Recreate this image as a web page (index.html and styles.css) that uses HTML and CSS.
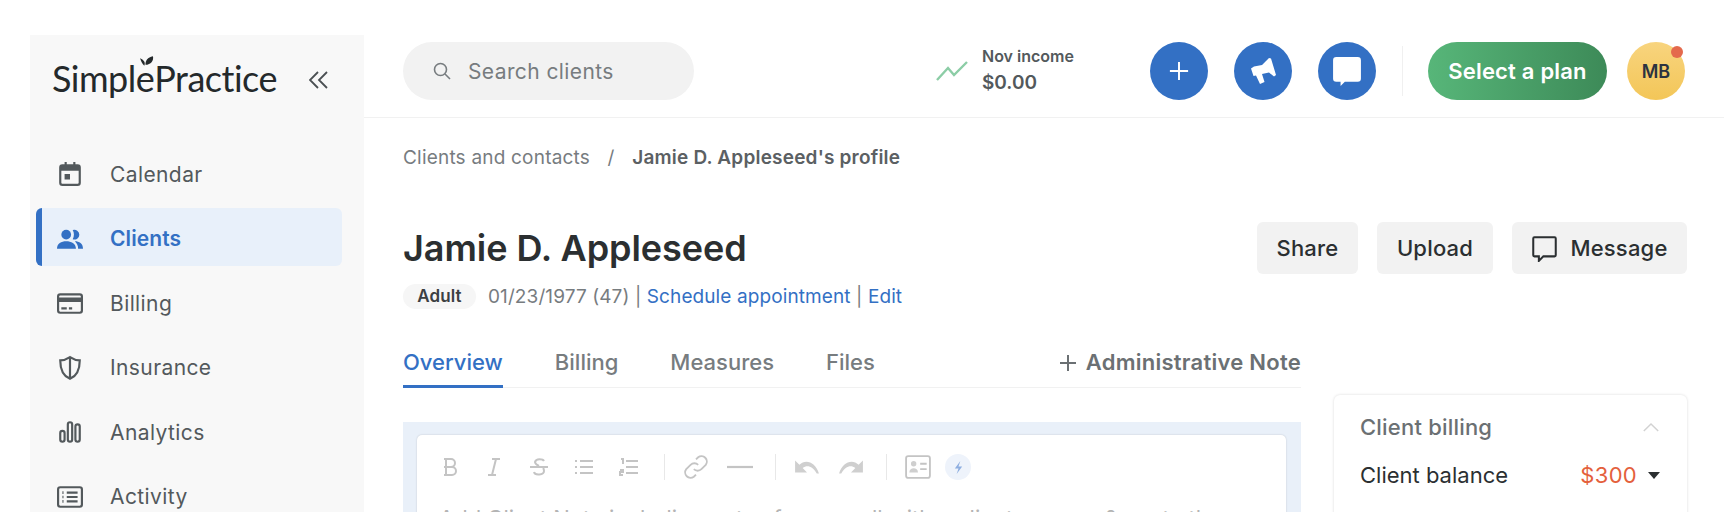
FILE: index.html
```html
<!DOCTYPE html>
<html>
<head>
<meta charset="UTF-8">
<title>Jamie D. Appleseed's profile</title>
<link rel="stylesheet" href="styles.css">
</head>
<body>
<aside class="sidebar">
	<div class="brand">
		<span class="logo">Simpl<span class="logo-e">e<svg class="leaf" viewBox="0 0 14 12"><path d="M1 3c1 3 2 5 4 7 1-3 0-5-4-7z"/><path d="M6 9c0-4 2-7 7-8 1 4-2 8-7 8z"/></svg></span>Practice</span>
		<svg class="collapse" viewBox="0 0 20 20"><path d="M9 2 1 10l8 8M18 2l-8 8 8 8"/></svg>
	</div>
	<nav class="nav">
		<a class="nav-item">
			<svg class="nav-icon" viewBox="0 0 24 24"><path class="fill" d="M7 1h2v4H7zM15 1h2v4h-2zM3 4h18v5H3zM7 12h5v5H7z"/><rect x="3" y="4" width="18" height="18" rx="2"/></svg>
			Calendar
		</a>
		<a class="nav-item active">
			<svg class="nav-icon" viewBox="0 0 24 24"><circle class="fill" cx="8.500" cy="8" r="4.500"/><path class="fill" d="M14.500 3.800a4.500 4.500 0 1 1 0 8.400c1.500-2.500 1.500-6 0-8.400zM0 21c0-5 4-7 8.500-7s9 2 9 7zM19.500 21c0-3-1-5-3-7 4 0 7.500 2 7.500 7z"/></svg>
			Clients
		</a>
		<a class="nav-item">
			<svg class="nav-icon" viewBox="0 0 24 24"><rect x="1" y="4" width="22" height="17" rx="2"/><path class="fill" d="M1 7h22v4H1zM4 16h5v2H4zM11 16h3v2h-3z"/></svg>
			Billing
		</a>
		<a class="nav-item">
			<svg class="nav-icon" viewBox="0 0 24 24"><path d="M12 2c3 2 6 3 9 3 0 8-2 14-9 17C5 19 3 13 3 5c3 0 6-1 9-3zM12 2v20"/></svg>
			Insurance
		</a>
		<a class="nav-item">
			<svg class="nav-icon" viewBox="0 0 24 24"><rect x="3" y="11" width="4" height="10" rx="2"/><rect x="10" y="3" width="4" height="18" rx="2"/><rect x="17" y="5" width="4" height="16" rx="2"/></svg>
			Analytics
		</a>
		<a class="nav-item">
			<svg class="nav-icon" viewBox="0 0 24 24"><rect x="1" y="3" width="22" height="18" rx="2"/><path d="M9 8h10M9 12h10M9 16h10"/><path class="dots" d="M5 8h1M5 12h1M5 16h1"/></svg>
			Activity
		</a>
	</nav>
</aside>

<div class="page">
	<header class="topbar">
		<div class="search">
			<svg class="search-icon" viewBox="0 0 20 20"><circle cx="8.500" cy="8.500" r="6"/><path d="m13 13 5 5"/></svg>
			Search clients
		</div>
		<div class="income">
			<svg class="income-icon" viewBox="0 0 32 22"><path d="M1 20 12 8l6 7L31 2"/></svg>
			<div>
				<div class="income-label">Nov income</div>
				<div class="income-value">$0.00</div>
			</div>
		</div>
		<div class="round-btns">
			<button class="round-btn"><svg viewBox="0 0 20 20"><path class="plus" d="M10 3v14M3 10h14"/></svg></button>
			<button class="round-btn"><svg class="horn" viewBox="0 0 28 28"><path class="solid" d="M20 1 22 1.500 27 18 25 19.500 20 15.500 13 17 15.500 25 11 27 7 18.500 4.500 19 2 11.500 5 9.500 13 8z"/></svg></button>
			<button class="round-btn"><svg class="big" viewBox="0 0 28 28"><path class="solid" d="M4 1h20a3 3 0 0 1 3 3v17a3 3 0 0 1-3 3H12l-4 4v-4H4a3 3 0 0 1-3-3V4a3 3 0 0 1 3-3z"/></svg></button>
		</div>
		<div class="vline"></div>
		<button class="plan-btn">Select a plan</button>
		<div class="avatar">MB<span class="dot"></span></div>
	</header>

	<main class="content">
		<div class="crumbs">Clients and contacts <span class="sep">/</span> <b>Jamie D. Appleseed's profile</b></div>

		<div class="title-row">
			<h1>Jamie D. Appleseed</h1>
			<div class="actions">
				<button class="btn btn-share">Share</button>
				<button class="btn btn-upload">Upload</button>
				<button class="btn btn-msg"><svg viewBox="0 0 24 24"><path d="M3 2h18a1 1 0 0 1 1 1v15a1 1 0 0 1-1 1H11l-4 4v-4H3a1 1 0 0 1-1-1V3a1 1 0 0 1 1-1z"/></svg>Message</button>
			</div>
		</div>

		<div class="meta">
			<span class="badge">Adult</span>
			<span>01/23/1977 (47) | <a>Schedule appointment</a> | <a>Edit</a></span>
		</div>

		<div class="columns">
			<div class="left">
				<div class="tabs">
					<a class="tab current">Overview</a>
					<a class="tab">Billing</a>
					<a class="tab">Measures</a>
					<a class="tab">Files</a>
					<a class="add-note"><svg viewBox="0 0 18 18"><path d="M9 1v16M1 9h16"/></svg>Administrative Note</a>
				</div>
				<div class="note-box">
					<div class="editor">
						<div class="toolbar">
							<span class="tool wider">
								<svg viewBox="0 0 20 20"><path d="M5 2h7a4 4 0 0 1 0 8H5h8a4 4 0 0 1 0 8H5M7 2v16"/></svg>
							</span>
							<span class="tool wider">
								<svg viewBox="0 0 20 20"><path d="M8 2h8M4 18h8M12 2 8 18"/></svg>
							</span>
							<span class="tool wider">
								<svg viewBox="0 0 20 20"><path d="M1 10h18M15 4c-1-2-8-3-9 1 0 2 2 3 4 4M5 15c1 4 10 3 10-1 0-1 0-2-1-3"/></svg>
							</span>
							<span class="tool wider">
								<svg viewBox="0 0 20 20"><path d="M6 4h13M6 10h13M6 16h13M1 4h2M1 10h2M1 16h2"/></svg>
							</span>
							<span class="tool">
								<svg viewBox="0 0 20 20"><path d="M7 4h12M7 10h12M7 16h12M2 2h2v5M1 13h3v2H1v3h3"/></svg>
							</span>
							<span class="tool-sep"></span>
							<span class="tool tool-big">
								<svg viewBox="0 0 24 24"><path d="M10 14a5 5 0 0 0 7 0l4-4a5 5 0 0 0-7-7l-2 2M14 10a5 5 0 0 0-7 0l-4 4a5 5 0 0 0 7 7l2-2"/></svg>
							</span>
							<span class="tool tool-big">
								<svg viewBox="0 0 20 20"><path d="M0 10h20"/></svg>
							</span>
							<span class="tool-sep"></span>
							<span class="tool tool-big">
								<svg viewBox="0 0 24 24"><path class="fill-gray" d="M1 6v11h11L8 13c4-3 9-2 13 5h2C20 8 11 4 5 10z"/></svg>
							</span>
							<span class="tool tool-big">
								<svg viewBox="0 0 24 24"><path class="fill-gray" d="M23 6v11H12l4-4c-4-3-9-2-13 5H1C4 8 13 4 19 10z"/></svg>
							</span>
							<span class="tool-sep"></span>
							<span class="tool tool-big">
								<svg viewBox="0 0 24 24"><rect x="1" y="2" width="22" height="20" rx="2"/><path d="M14 9h6M14 14h6"/><circle class="fill-gray" cx="8" cy="9" r="2.500"/><path class="fill-gray" d="M4 17c0-5 8-5 8 0z"/></svg>
							</span>
							<span class="bolt"><svg viewBox="0 0 12 16"><path d="M8 1 2 9h4l-2 6 6-8H6z"/></svg></span>
						</div>
						<div class="placeholder">Add Client Note including notes from a call with a client or copy &amp; paste the</div>
					</div>
				</div>
			</div>

			<div class="card">
				<div class="card-head">
					Client billing
					<svg class="chev" viewBox="0 0 20 12"><path d="m2 10 8-8 8 8"/></svg>
				</div>
				<div class="card-row">
					Client balance
					<span class="amount">$300<i class="caret"></i></span>
				</div>
			</div>
		</div>
	</main>
</div>
</body>
</html>
```

FILE: styles.css
```css
* {
	box-sizing: border-box;
}
html, body {
	height: 512px;
	overflow: hidden;
}
body {
	margin: 0;
	padding-left: 30px;
	display: flex;
	background-color: #ffffff;
	font-family: 'Inter', 'Liberation Sans', sans-serif;
	color: #2b2f31;
}
button {
	font-family: inherit;
	border: 0;
}
svg {
	display: block;
	fill: none;
	stroke: currentColor;
}

/* sidebar */
.sidebar {
	width: 334px;
	flex: none;
	margin-top: 35px;
	padding-left: 6px;
	background-color: #f8f8f8;
}
.brand {
	height: 110px;
	padding: 0 0 24px 16px;
	display: flex;
	align-items: center;
}
.logo {
	font-family: 'Lato', sans-serif;
	font-size: 36px;
	letter-spacing: -0.5px;
	color: #24292b;
}
.logo-e {
	position: relative;
}
.leaf {
	position: absolute;
	left: 3px;
	top: -1px;
	width: 15px;
	height: 13px;
	fill: #24292b;
	stroke: none;
}
.collapse {
	width: 20px;
	height: 20px;
	margin: 3px 0 0 32px;
	stroke: #4a4f52;
	stroke-width: 1.8;
}
.nav {
	display: flex;
	flex-direction: column;
	gap: 6.600px;
	width: 306px;
}
.nav-item {
	height: 58px;
	display: flex;
	align-items: center;
	gap: 27px;
	padding-left: 21px;
	font-size: 21px;
	letter-spacing: 0.4px;
	color: #53595c;
	flex: none;
}
.nav-item.active {
	background-color: #e8f0fa;
	border-left: 6px solid #3370c4;
	border-radius: 6px;
	margin: -2px 0 2px;
	padding-left: 15px;
	padding-top: 4px;
	color: #3370c4;
	font-weight: 600;
	letter-spacing: 0.1px;
}
.nav-icon {
	width: 26px;
	height: 26px;
	stroke-width: 2;
}
.nav-icon .fill {
	fill: currentColor;
	stroke: none;
}
.nav-icon .dots {
	stroke-width: 2.500;
}

/* top bar */
.page {
	flex: 1;
	min-width: 0;
}
.topbar {
	height: 118px;
	padding: 42px 32px 0 39px;
	display: flex;
	align-items: flex-start;
	border-bottom: 1px solid #f1f1f1;
}
.search {
	width: 291px;
	height: 58px;
	border-radius: 29px;
	background-color: #f2f2f2;
	display: flex;
	align-items: center;
	gap: 16px;
	padding-left: 29px;
	font-size: 21px;
	letter-spacing: 0.4px;
	color: #777c7f;
}
.search-icon {
	width: 20px;
	height: 20px;
	stroke: #777c7f;
	stroke-width: 1.600;
}
.income {
	display: flex;
	align-items: center;
	gap: 14px;
	margin-left: 242px;
	height: 58px;
	width: 214px;
}
.income-icon {
	width: 32px;
	height: 22px;
	stroke: #8ccda6;
	stroke-width: 2.400;
}
.income-label {
	font-size: 16px;
	font-weight: 600;
	color: #53595c;
	line-height: 23px;
}
.income-value {
	font-size: 19px;
	font-weight: 600;
	color: #53595c;
	line-height: 29px;
}
.round-btns {
	display: flex;
	gap: 26px;
}
.round-btn {
	width: 58px;
	height: 58px;
	padding: 0;
	border-radius: 50%;
	background-color: #3370c4;
	display: flex;
	align-items: center;
	justify-content: center;
	color: #ffffff;
}
.round-btn svg {
	width: 26px;
	height: 26px;
}
.round-btn svg.big {
	width: 30px;
	height: 30px;
}
.round-btn .plus {
	stroke-width: 1.500;
}
.round-btn .solid {
	fill: #ffffff;
	stroke: none;
}
.vline {
	width: 1px;
	height: 50px;
	margin: 4px 25px 0 26px;
	background-color: #f0f0f0;
}
.plan-btn {
	width: 179px;
	height: 58px;
	padding: 0;
	border-radius: 29px;
	background: linear-gradient(90deg, #57b679, #3d8a58);
	color: #ffffff;
	font-size: 22px;
	font-weight: 600;
	letter-spacing: 0.2px;
}
.avatar {
	position: relative;
	width: 58px;
	height: 58px;
	margin-left: 20px;
	border-radius: 50%;
	background: linear-gradient(180deg, #f8d47e, #f3c658);
	display: flex;
	align-items: center;
	justify-content: center;
	font-size: 18px;
	font-weight: 600;
	color: #2c3340;
}
.dot {
	position: absolute;
	top: 4px;
	right: 2px;
	width: 12px;
	height: 12px;
	border-radius: 50%;
	background-color: #e4694c;
}

/* profile */
.content {
	padding: 27px 37px 0 39px;
}
.crumbs {
	font-size: 19px;
	letter-spacing: 0.2px;
	line-height: 26px;
	color: #777c7f;
}
.crumbs b {
	font-weight: 600;
	color: #5b6063;
}
.sep {
	margin: 0 12px;
}
.title-row {
	display: flex;
	justify-content: space-between;
	margin-top: 51px;
}
h1 {
	margin: 0;
	font-size: 36px;
	line-height: 52px;
	font-weight: 600;
	letter-spacing: -0.05px;
	color: #2b2f31;
}
.actions {
	display: flex;
	gap: 19px;
}
.btn {
	height: 52px;
	padding: 0;
	border-radius: 6px;
	background-color: #f2f2f2;
	font-size: 22px;
	font-weight: 500;
	letter-spacing: 0.2px;
	color: #2b2f31;
	display: flex;
	align-items: center;
	justify-content: center;
}
.btn-share {
	width: 101px;
}
.btn-upload {
	width: 116px;
}
.btn-msg {
	width: 175px;
}
.btn-msg svg {
	width: 27px;
	height: 27px;
	margin-right: 12px;
	stroke-width: 1.800;
}
.meta {
	display: flex;
	align-items: center;
	gap: 12px;
	margin-top: 10px;
	height: 25px;
	font-size: 19px;
	letter-spacing: 0.1px;
	color: #777c7f;
}
.meta a {
	color: #3370c4;
}
.badge {
	width: 73px;
	height: 25px;
	border-radius: 13px;
	background-color: #f6f6f6;
	text-align: center;
	font-size: 17px;
	line-height: 25px;
	font-weight: 600;
	color: #3c4043;
}
.columns {
	display: flex;
	gap: 33px;
	margin-top: 31px;
}
.left {
	width: 898px;
	flex: none;
}
.tabs {
	height: 48px;
	display: flex;
	gap: 52px;
	border-bottom: 1px solid #f1f1f1;
	font-size: 22px;
	font-weight: 500;
	color: #777c7f;
}
.tab {
	height: 48px;
	padding-top: 9px;
}
.tab.current {
	color: #3370c4;
	border-bottom: 3px solid #3370c4;
}
.add-note {
	margin-left: auto;
	padding-top: 9px;
	display: flex;
	align-items: flex-start;
	gap: 9px;
	font-weight: 600;
	letter-spacing: 0.25px;
	color: #6b7073;
}
.add-note svg {
	width: 18px;
	height: 18px;
	margin-top: 5px;
	stroke-width: 2;
}
.note-box {
	margin-top: 34px;
	height: 200px;
	padding: 13px 15px 0 14px;
	background-color: #e9f0f9;
}
.editor {
	height: 200px;
	padding: 0 0 0 22px;
	background-color: #ffffff;
	border-radius: 5px;
	box-shadow: 0 0 2px rgba(0, 0, 0, 0.18);
}
.toolbar {
	height: 64px;
	display: flex;
	align-items: center;
	gap: 24px;
	color: #c4c4c4;
}
.tool svg {
	width: 20px;
	height: 20px;
	stroke-width: 2;
}
.tool.wider {
	margin-right: 1px;
}
.tool.tool-big {
	margin: 0 -3px;
}
.tool.tool-big svg {
	width: 26px;
	height: 26px;
	stroke-width: 1.700;
}
.round-btn svg.horn {
	width: 28px;
	height: 28px;
}
.tool-sep {
	width: 1px;
	height: 26px;
	background-color: #e8e8e8;
	margin: 0 -3px 0 1px;
}
.fill-gray {
	fill: #cfcfcf;
	stroke: none;
}
.bolt {
	width: 26px;
	height: 26px;
	margin-left: -7px;
	border-radius: 50%;
	background-color: #eef3fb;
	display: flex;
	align-items: center;
	justify-content: center;
}
.bolt svg {
	width: 11px;
	height: 15px;
	fill: #8eaee0;
	stroke: none;
}
.placeholder {
	font-size: 22px;
	line-height: 26px;
	margin-top: 6px;
	color: #b4b4b4;
	white-space: nowrap;
}
.card {
	width: 353px;
	height: 200px;
	margin-top: 55px;
	padding: 18px 27px 0 26px;
	border-radius: 6px;
	background-color: #ffffff;
	box-shadow: 0 0 3px rgba(0, 0, 0, 0.15);
}
.card-head {
	display: flex;
	justify-content: space-between;
	align-items: center;
	height: 28px;
	font-size: 22px;
	font-weight: 500;
	letter-spacing: 0.2px;
	color: #6b7073;
}
.chev {
	width: 18px;
	height: 11px;
	stroke: #d2d2d2;
	stroke-width: 1.600;
}
.card-row {
	display: flex;
	justify-content: space-between;
	align-items: center;
	height: 28px;
	margin-top: 20px;
	font-size: 22px;
	color: #2b2f31;
}
.amount {
	display: flex;
	align-items: center;
	letter-spacing: 0.3px;
	color: #e4603c;
}
.caret {
	width: 0;
	height: 0;
	margin-left: 11px;
	border-left: 6px solid transparent;
	border-right: 6px solid transparent;
	border-top: 7px solid #2b2f31;
}
```
